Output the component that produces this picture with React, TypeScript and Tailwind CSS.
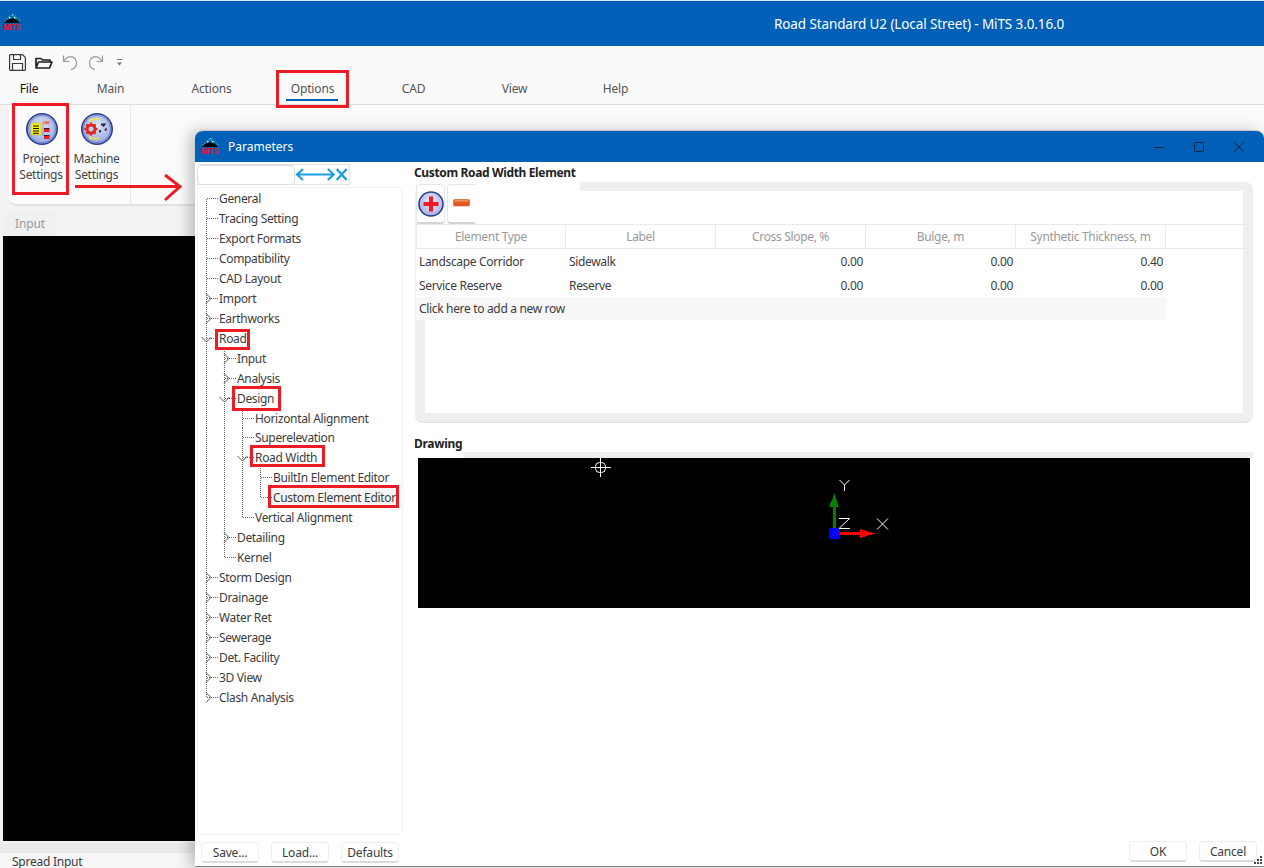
import React from "react";

const FONT = "font-['Noto_Sans','Liberation_Sans',sans-serif]";

function Logo({ className }: { className: string }) {
  const dots = [
    [3, 4, "#2a8fd0"], [5, 2, "#28a060"], [7, 1, "#2a8fd0"], [9, 0, "#9ad0f0"], [10, 2, "#28a060"], [12, 1, "#2a8fd0"],
    [13, 3, "#28a060"], [15, 4, "#2a8fd0"], [6, 3, "#d8f0ff"], [11, 3, "#d8f0ff"], [1.5, 6, "#28a060"], [16, 6, "#28a060"],
  ] as [number, number, string][];
  return (
    <svg viewBox="0 0 18 16" className={`overflow-visible ${className}`}>
      {dots.map(([x, y, c], i) => (
        <rect key={i} x={x} y={y} width="1.5" height="1.5" fill={c} />
      ))}
      <path d="M1 9 C4 5.5 6 4.5 9 4.5 C12 4.5 14 5.5 17 9 Z" fill="#000" />
      <text x="0.2" y="16" fontSize="9.6" fontWeight="700" fill="#f01020" textLength="17.6" lengthAdjust="spacingAndGlyphs" fontFamily="Liberation Sans, sans-serif">MITS</text>
    </svg>
  );
}

function Orb({ children, id }: { children: React.ReactNode; id: string }) {
  return (
    <svg viewBox="0 0 32 32" className="w-8 h-8 block">
      <defs>
        <radialGradient id={id} cx="50%" cy="40%" r="60%">
          <stop offset="0%" stopColor="#dfe6f7" />
          <stop offset="100%" stopColor="#93a5dc" />
        </radialGradient>
      </defs>
      <circle cx="16" cy="16" r="15.2" fill={`url(#${id})`} stroke="#2d3c94" strokeWidth="1.6" />
      <circle cx="16" cy="16" r="13.6" fill="none" stroke="#6377c0" strokeWidth="0.8" />
      {children}
    </svg>
  );
}

function ProjectIcon() {
  return (
    <Orb id="orbA">
      <rect x="5" y="10" width="10" height="12" fill="#f5ee20" stroke="#b9ac30" strokeWidth="0.5" />
      <path d="M7 13h6M7 15.5h6M7 18h6M7 20.3h6" stroke="#111" strokeWidth="1" />
      <path d="M17 8v15" stroke="#666" strokeWidth="0.6" />
      <rect x="18" y="8" width="5.5" height="3.2" fill="#f07a70" />
      <rect x="18" y="15" width="5.5" height="1.5" fill="#222" />
      <rect x="18" y="16" width="5.5" height="3" fill="#ec1c24" />
      <rect x="18" y="22" width="5.5" height="1.5" fill="#222" />
      <rect x="18" y="23" width="5.5" height="3" fill="#ec1c24" />
    </Orb>
  );
}

function MachineIcon() {
  return (
    <Orb id="orbB">
      <path d="M9 9V6.5h9M9 23v2.5h9" fill="none" stroke="#f4e64a" strokeWidth="1.6" />
      <circle cx="10" cy="16" r="4" fill="none" stroke="#e0281c" strokeWidth="3" />
      <path d="M10 9.4v3M10 19.6v3M3.4 16h3M13.6 16h3M5.3 11.3l2.1 2.1M12.6 18.6l2.1 2.1M14.7 11.3l-2.1 2.1M7.4 18.6l-2.1 2.1" stroke="#e0281c" strokeWidth="2" />
      <path d="M20 11.5h3.5l-1.5 2M19 17v2.5M24 17.5l1.5-2" fill="none" stroke="#23283a" strokeWidth="1.8" />
    </Orb>
  );
}

function RedBox({ className }: { className: string }) {
  return <div className={`absolute border-[3px] border-[#ed1c24] pointer-events-none z-30 ${className}`} />;
}

function Btn({ label, className = "" }: { label: string; className?: string }) {
  return (
    <button className={`h-[21px] w-[58px] pt-[1px] rounded-[4px] bg-white border border-[#ededed] border-b-2 border-b-[#dcdcdc] text-xs leading-none tracking-[-0.2px] text-[#3c3c3c] ${className}`}>
      {label}
    </button>
  );
}

type Row = { label: string; level: number; exp?: "r" | "d"; last?: boolean; first?: boolean; h?: number; sel?: boolean };

const tree: Row[] = [
  { label: "General", level: 0, first: true },
  { label: "Tracing Setting", level: 0 },
  { label: "Export Formats", level: 0 },
  { label: "Compatibility", level: 0 },
  { label: "CAD Layout", level: 0 },
  { label: "Import", level: 0, exp: "r" },
  { label: "Earthworks", level: 0, exp: "r" },
  { label: "Road", level: 0, exp: "d" },
  { label: "Input", level: 1, exp: "r" },
  { label: "Analysis", level: 1, exp: "r" },
  { label: "Design", level: 1, exp: "d" },
  { label: "Horizontal Alignment", level: 2, h: 19 },
  { label: "Superelevation", level: 2 },
  { label: "Road Width", level: 2, exp: "d" },
  { label: "BuiltIn Element Editor", level: 3 },
  { label: "Custom Element Editor", level: 3, last: true, sel: true },
  { label: "Vertical Alignment", level: 2, last: true },
  { label: "Detailing", level: 1, exp: "r" },
  { label: "Kernel", level: 1, last: true },
  { label: "Storm Design", level: 0, exp: "r" },
  { label: "Drainage", level: 0, exp: "r" },
  { label: "Water Ret", level: 0, exp: "r" },
  { label: "Sewerage", level: 0, exp: "r" },
  { label: "Det. Facility", level: 0, exp: "r" },
  { label: "3D View", level: 0, exp: "r" },
  { label: "Clash Analysis", level: 0, exp: "r", last: true },
];

function Guide() {
  return (
    <svg width="18" height="20" className="shrink-0 block">
      <path d="M0.5 0V20" stroke="#666" strokeDasharray="1 1" />
    </svg>
  );
}

function Branch({ row }: { row: Row }) {
  const top = row.first ? 10 : 0;
  const bottom = row.last ? 10 : 20;
  return (
    <svg width="13" height="20" className="shrink-0 block overflow-visible">
      <path d={`M0.5 ${top}V${bottom}`} stroke="#666" strokeDasharray="1 1" />
      <path d="M1 9.5H13" stroke="#666" strokeDasharray="1 1" />
      {row.exp === "r" && <path d="M0 4.5L5 9.5L0 14.5" fill="none" stroke="#555" strokeWidth="1" />}
      {row.exp === "d" && <path d="M-4.5 8L0.5 13L5.5 8" fill="none" stroke="#555" strokeWidth="1" />}
    </svg>
  );
}

function TreeRow({ row }: { row: Row }) {
  return (
    <div className="flex items-start overflow-visible" style={row.h ? { height: row.h } : { height: 20 }}>
      {Array.from({ length: row.level }).map((_, i) => (
        <Guide key={i} />
      ))}
      <Branch row={row} />
      <span className={`h-[20px] leading-[20px] text-xs tracking-[-0.33px] text-[#3c3c3c] whitespace-nowrap ${row.sel ? "bg-[#f5f5f5]" : ""}`}>{row.label}</span>
    </div>
  );
}

const cols = ["Element Type", "Label", "Cross Slope, %", "Bulge, m", "Synthetic Thickness, m"];
const data = [
  ["Landscape Corridor", "Sidewalk", "0.00", "0.00", "0.40"],
  ["Service Reserve", "Reserve", "0.00", "0.00", "0.00"],
];

function Grid() {
  return (
    <div className="-ml-[9px] -mr-[10px] text-xs tracking-[-0.33px]">
      <div className="flex h-[25px] border-y border-[#eaeaea]">
        {cols.map((c, i) => (
          <div key={c} className={`w-[150px] shrink-0 bg-white border-r border-[#eaeaea] flex items-center justify-center text-[#999] ${i === 0 ? "border-l" : ""}`}>
            {c}
          </div>
        ))}
      </div>
      {data.map((r) => (
        <div key={r[0]} className="flex h-[24px] w-[750px] bg-white items-center pt-[2px] text-[#3c3c3c]">
          {r.map((v, i) => (
            <div key={i} className={`w-[150px] shrink-0 px-[3px] ${i > 1 ? "text-right" : ""}`}>
              {v}
            </div>
          ))}
        </div>
      ))}
      <div className="h-[23px] w-[750px] bg-[#f7f7f7] flex items-center px-[3px] text-[#3c3c3c]">Click here to add a new row</div>
    </div>
  );
}

function Drawing() {
  return (
    <svg viewBox="0 0 832 150" className="w-[832px] h-[150px] block ml-[3px] bg-black" shapeRendering="crispEdges">
      <g transform="translate(-418 -458)">
        <g stroke="#fff" fill="none" strokeWidth="1">
          <path d="M591 467.5H611M600.5 458V477" />
          <rect x="595.5" y="462.5" width="10" height="10" rx="4" shapeRendering="auto" />
        </g>
        <rect x="833" y="505" width="3" height="24" fill="#008000" />
        <path d="M834.5 494L839 507H829Z" fill="#008000" />
        <rect x="840" y="532" width="21" height="3" fill="#ff0000" />
        <path d="M860 529L875 533.5L860 538Z" fill="#ff0000" />
        <rect x="829" y="528" width="11" height="11" fill="#0000ff" />
        <g stroke="#fff" fill="none" strokeWidth="1" shapeRendering="auto">
          <path d="M839.5 480L844.5 485L849.5 480M844.5 485V491" />
          <path d="M877 518.5L888 529.5M888 518.5L877 529.5" />
          <path d="M839 518.5H849.5L839 528.5H850" />
        </g>
      </g>
    </svg>
  );
}

function QuickAccess() {
  return (
    <svg width="114" height="18" viewBox="0 0 114 18" className="block" fill="none">
      <g stroke="#3a3a3a" strokeWidth="1.2">
        <path d="M1.6 0.6H13.5L16.4 3.5V15.4Q16.4 16.4 15.4 16.4H1.6Q0.6 16.4 0.6 15.4V1.6Q0.6 0.6 1.6 0.6Z" />
        <path d="M4.5 0.8V5.5H11.5V0.8M3.5 16.2V9.5H13.5V16.2" />
      </g>
      <path d="M27 12.5V4.5H32L33.5 6H41V8M27 14L29.5 8H43L40.5 14Z" stroke="#222" strokeWidth="1.7" strokeLinejoin="round" />
      <g stroke="#9a9a9a" strokeWidth="1.2" strokeLinejoin="round">
        <path d="M54.5 1.5V7.5H60.5M54.8 7.2C57 4 59 2.6 61.5 2.6C65 2.6 67.5 5.5 67.5 9C67.5 12 65.5 14.6 62 15.6" />
        <path d="M93.5 1.5V7.5H87.5M93.2 7.2C91 4 89 2.6 86.5 2.6C83 2.6 80.5 5.5 80.5 9C80.5 12 82.5 14.6 86 15.6" />
      </g>
      <path d="M108 5.5H113" stroke="#777" />
      <path d="M108 8.5H113L110.5 11.5Z" fill="#777" />
    </svg>
  );
}

export default function App() {
  const tabs = ["Main", "Actions", "Options", "CAD", "View", "Help"];
  return (
    <div className={`relative w-[1264px] h-[868px] overflow-hidden bg-[#f3f3f3] text-xs text-[#3c3c3c] ${FONT}`}>
      <div className="flex flex-col h-full">
        {/* main title bar */}
        <div className="h-[46px] shrink-0 border-t border-[#dfe8f2] bg-[#0060b8] relative flex items-center">
          <Logo className="w-[18px] h-[16px] absolute left-[3px] top-[13px]" />
          <div className="ml-[774px] mt-[1px] text-[13.5px] tracking-[-0.11px] text-white whitespace-nowrap">Road Standard U2 (Local Street) - MiTS 3.0.16.0</div>
        </div>
        {/* quick access */}
        <div className="h-[30px] shrink-0 bg-[#fafafa] pl-[9px] pt-[8px]">
          <QuickAccess />
        </div>
        {/* tabs */}
        <div className="h-[29px] shrink-0 bg-[#fafafa] border-b border-[#dedede] flex tracking-[-0.15px]">
          <div className="w-[60px] pr-[2px] h-[25px] flex items-center justify-center text-[#111]">File</div>
          {tabs.map((t) => (
            <div key={t} className="w-[101px] h-[25px] flex items-center justify-center text-[#555] relative">
              <span>{t}</span>
              {t === "Options" && <div className="absolute left-[24px] w-[52px] top-[23px] h-[2px] bg-[#0060b8]" />}
            </div>
          ))}
        </div>
        {/* ribbon */}
        <div className="h-[101px] shrink-0 ml-[9px] bg-[#fbfbfb] rounded-bl-lg border-b-2 border-[#e2e2e2] flex">
          <div className="w-[122px] border-r border-[#e6e6e6] flex text-center leading-[16px] tracking-[-0.3px] text-[#444]">
            <div className="w-[60px] pl-[4px] flex flex-col items-center pt-[8px]">
              <div className="pl-[2px]"><ProjectIcon /></div>
              <div className="mt-[6px]">Project<br />Settings</div>
            </div>
            <div className="w-[55px] flex flex-col items-center pt-[8px]">
              <MachineIcon />
              <div className="mt-[6px]">Machine<br />Settings</div>
            </div>
          </div>
        </div>
        {/* doc tab */}
        <div className="h-[30px] shrink-0 pt-[5px] pl-[3px]">
          <div className="w-[54px] h-[25px] rounded-t-md bg-[#f0f0f0] flex items-center justify-center text-[#999] tracking-[-0.15px]">Input</div>
        </div>
        <div className="h-[605px] shrink-0 bg-black ml-[3px]" />
        <div className="h-[10px] shrink-0 bg-[#ebebeb] mt-[2px]" />
        <div className="flex-1 bg-[#f6f6f6] pl-[12px] pt-[3px] tracking-[-0.25px] leading-[12px] whitespace-nowrap">Spread Input</div>
      </div>

      {/* dialog window */}
      <div className="absolute left-[195px] top-[130px] w-[1069px] h-[737px] flex flex-col bg-white rounded-t-lg overflow-hidden border-t border-[#c8c8c8] border-b border-b-[#888] shadow-[-6px_0_14px_rgba(0,0,0,0.22)] z-10">
        <div className="h-[31px] shrink-0 bg-[#0060b8] flex items-center relative">
          <Logo className="w-[18px] h-[16px] ml-[6px] mt-[-1px]" />
          <div className="ml-[9px] text-white whitespace-nowrap text-xs leading-[16px]">Parameters</div>
          <svg width="100" height="14" viewBox="0 0 100 14" className="absolute left-[959px] top-[9px]">
            <path d="M0 7.5H10" stroke="#10233a" />
            <rect x="40.5" y="2.5" width="9" height="9" rx="1" fill="none" stroke="#10233a" />
            <path d="M80 2L90 12M90 2L80 12" stroke="#10233a" />
          </svg>
        </div>
        <div className="flex-1 flex min-h-0">
          {/* left column */}
          <div className="w-[219px] shrink-0 pl-[2px] flex flex-col">
            <div className="h-[21px] mt-[2px] w-[153px] flex border border-[#e2e2e2] border-l-0">
              <div className="w-[99px] h-[20px] bg-white border border-[#dcdcdc] rounded-[4px]" />
              <svg width="54" height="19" viewBox="0 0 54 19" className="block">
                <path d="M2 9.5H38M8 4L2 9.5L8 15M33 4L39 9.5L33 15" fill="none" stroke="#1ba1e2" strokeWidth="2.2" />
                <path d="M42 4L52 15M52 4L42 15" fill="none" stroke="#1ba1e2" strokeWidth="2.4" />
              </svg>
            </div>
            <div className="h-[648px] mt-[2px] w-[206px] border border-[#f0f0f0] rounded-md pl-[8px] pt-[1px] overflow-hidden">
              {tree.map((r) => (
                <TreeRow key={r.label} row={r} />
              ))}
            </div>
            <div className="flex gap-[12px] pl-[4px] mt-[7px]">
              <Btn label="Save..." />
              <Btn label="Load..." />
              <Btn label="Defaults" />
            </div>
          </div>
          {/* right column */}
          <div className="flex-1 min-w-0 flex flex-col">
            <div className="h-[29px] w-[166px] bg-white relative z-10 pt-[3px] font-bold leading-[16px] text-xs tracking-[-0.36px] text-[#222] whitespace-nowrap">Custom Road Width Element</div>
            <div className="-mt-[9px] ml-[1px] w-[838px] h-[241px] bg-[#efefef] rounded-lg border-b border-[#e0e0e0] pt-[9px] px-[10px] pb-[9px]">
              <div className="bg-white h-full">
                <div className="relative z-20 -ml-[9px] h-[33px] flex gap-[2px]">
                  <div className="w-[29px] h-[40px] -mt-[7px] bg-white rounded-[4px] border border-[#e6e6e6] border-b-2 border-b-[#d4d4d4] flex items-center justify-center">
                    <svg viewBox="0 0 26 26" className="w-[26px] h-[26px]">
                      <defs>
                        <radialGradient id="plusG" cx="50%" cy="40%" r="60%">
                          <stop offset="0%" stopColor="#eef0fb" />
                          <stop offset="100%" stopColor="#a4b0e0" />
                        </radialGradient>
                      </defs>
                      <circle cx="13" cy="13" r="12" fill="url(#plusG)" stroke="#2d3c94" strokeWidth="1.6" />
                      <path d="M13 5.5V20.5M5.5 13H20.5" stroke="#f01824" strokeWidth="4" />
                    </svg>
                  </div>
                  <div className="w-[28px] h-[40px] -mt-[7px] bg-white rounded-l-[4px] border-l border-t border-b-2 border-[#e6e6e6] border-b-[#d4d4d4] flex items-center pl-[5px] pb-[2px]">
                    <svg width="17" height="8" viewBox="0 0 17 8">
                      <rect x="0.5" y="0.5" width="16" height="6.5" rx="1" fill="#e2581e" stroke="#c04a18" strokeWidth="0.5" />
                      <rect x="1.5" y="1" width="14" height="1.6" fill="#f09060" />
                    </svg>
                  </div>
                </div>
                <Grid />
              </div>
            </div>
            <div className="mt-[13px] ml-[1px] w-[838px]">
              <div className="h-[22px] flex items-end">
                <div className="w-[50px] h-[22px] -ml-[1px] font-bold leading-[16px] tracking-[-0.3px] text-[#222]">Drawing</div>
                <div className="flex-1 h-[6px] bg-[#efefef]" />
              </div>
              <Drawing />
            </div>
            <div className="flex-1" />
            <div className="flex justify-end gap-[12px] pr-[7px] mb-[4px] relative">
              <Btn label="OK" />
              <Btn label="Cancel" />
              <svg width="10" height="10" viewBox="0 0 10 10" className="absolute right-[1px] bottom-[-3px]">
                <path d="M7 1h2v2H7zM4 4h2v2H4zM7 4h2v2H7zM1 7h2v2H1zM4 7h2v2H4zM7 7h2v2H7z" fill="#444" />
              </svg>
            </div>
          </div>
        </div>
      </div>

      {/* annotations */}
      <RedBox className="left-[12px] top-[103px] w-[57px] h-[92px]" />
      <RedBox className="left-[276px] top-[70px] w-[73px] h-[38px]" />
      <RedBox className="left-[215px] top-[329px] w-[35px] h-[21px]" />
      <RedBox className="left-[232px] top-[386px] w-[49px] h-[25px]" />
      <RedBox className="left-[250px] top-[445px] w-[75px] h-[22px]" />
      <RedBox className="left-[268px] top-[485px] w-[131px] h-[23px]" />
      <svg width="110" height="30" viewBox="0 0 110 30" className="absolute left-[74px] top-[173px] z-30">
        <path d="M1 13.5H106M91 2L106 13.5L91 27" fill="none" stroke="#ed1c24" strokeWidth="3" />
      </svg>
    </div>
  );
}
